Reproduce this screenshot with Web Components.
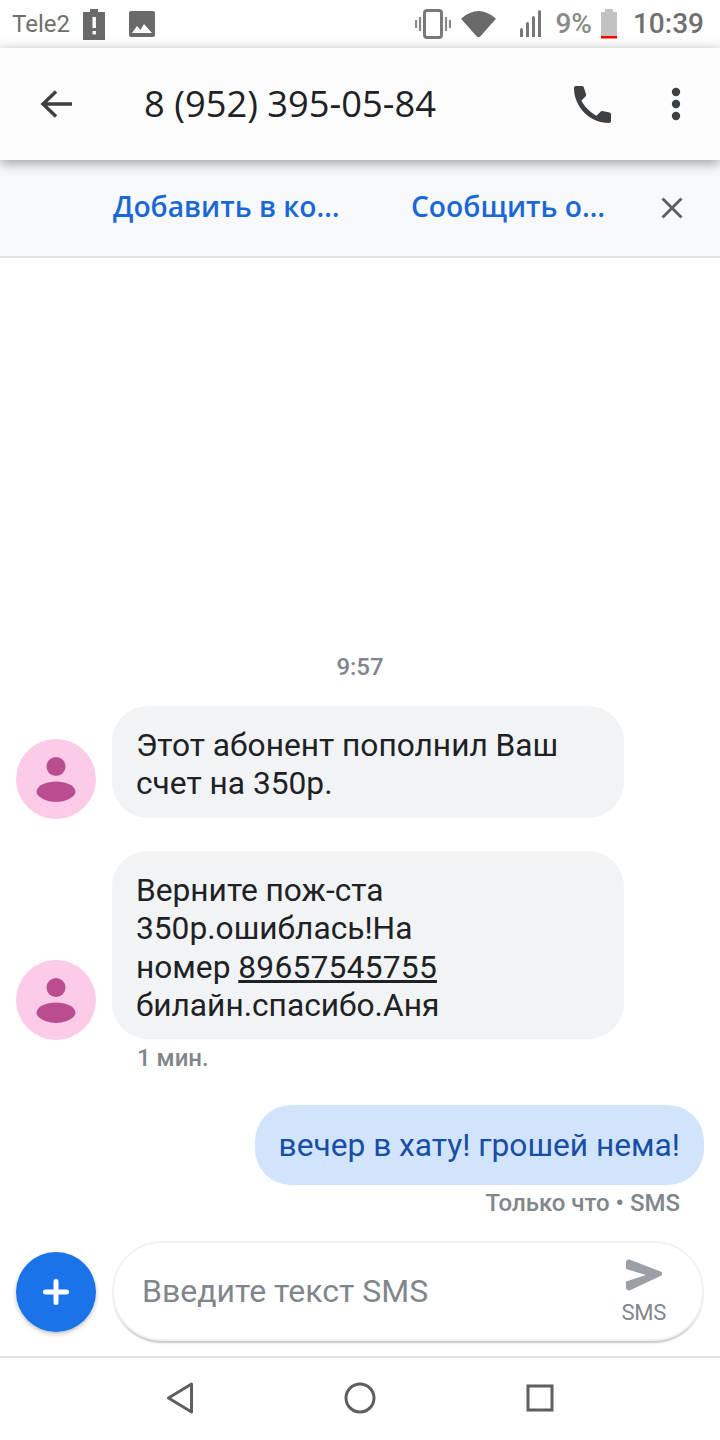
<!DOCTYPE html>
<html lang="ru"><head><meta charset="utf-8"><style>
html,body{margin:0;padding:0;background:#fff}
body{width:720px;height:1440px;overflow:hidden;font-family:Roboto,sans-serif;display:flex;flex-direction:column}
u{letter-spacing:.25px;text-underline-offset:2px}
</style></head><body>
<x-status></x-status>
<x-appbar></x-appbar>
<x-banner></x-banner>
<x-thread>
  <x-time>9:57</x-time>
  <x-msg style="margin-top:25px;--pb:14.500px">Этот абонент пополнил Ваш<br>счет на 350р.</x-msg>
  <x-msg style="margin-top:33px;--pb:13.500px" meta="1 мин.">Верните пож-ста<br>350р.ошиблась!На<br>номер <u>89657545755</u><br>билайн.спасибо.Аня</x-msg>
  <x-out meta="Только что • SMS">вечер в хату! грошей нема!</x-out>
</x-thread>
<x-composer></x-composer>
<x-navbar></x-navbar>
<script>
const def=(n,html)=>customElements.define(n,class extends HTMLElement{constructor(){super();this.attachShadow({mode:'open'}).innerHTML=typeof html==='function'?html(this):html}});
def('x-status',`<style>
:host{display:flex;align-items:center;height:48px;flex:none;background:#fff;color:#6f6f6f;font:400 24px/50px Roboto,sans-serif;padding:0 16px 0 12px;box-sizing:border-box}
svg{display:block;flex:none}
.sp{flex:1}
b{font-weight:500;font-size:28px}
</style>
<span>Tele2</span>
<svg style="margin-left:13px" width="22" height="32" viewBox="0 0 22 32"><path fill="#6a6a6a" d="M7 1h8v3h7v28H0V4h7z"/><rect x="9.500" y="9" width="3.400" height="11" fill="#fff"/><rect x="9.500" y="23" width="3.400" height="3.400" fill="#fff"/></svg>
<svg style="margin-left:24px" width="26" height="26" viewBox="0 0 26 26"><rect width="26" height="26" rx="2" fill="#6a6a6a"/><path fill="#fff" d="M3 22l5-7 3.500 4 3.500-6 8 9z"/></svg>
<span class="sp"></span>
<svg width="36" height="30" viewBox="0 0 36 30" style="margin-right:10px"><rect x="9.500" y="1.500" width="17" height="27" rx="2.500" fill="none" stroke="#7a7a7a" stroke-width="3"/><path stroke="#888" stroke-width="2.200" d="M5 8v14M1 11v8M31 8v14M35 11v8"/></svg>
<svg width="35" height="28" viewBox="0 0 36 28" style="margin-right:24px"><path fill="#6a6a6a" d="M0 8.500Q18-7 36 8.500L20 26.500q-2 2-4 0z"/></svg>
<svg width="21" height="28" viewBox="0 0 21 28" style="margin-right:14px"><path fill="#777" d="M0 20q0-2 1.500-2T3 20v7H0zM6 14q0-2 1.500-2T9 14v13H6zM12 8q0-2 1.500-2T15 8v19h-3zM18 2q0-2 1.500-2T21 2v25h-3z"/></svg>
<span style="font-size:28px;font-weight:500;color:#8a8a8a">9%</span>
<svg width="16" height="30" viewBox="0 0 16 30" style="margin:0 16px 0 9px"><path fill="#c2c2c2" d="M4 0h8v3h4v24H0V3h4z"/><rect y="27" width="16" height="2.500" fill="#f00"/></svg>
<b>10:39</b>`);
def('x-appbar',`<style>
:host{display:flex;align-items:center;height:112px;flex:none;background:#fcfcfc;box-shadow:0 3px 12px rgba(0,0,0,.38);position:relative;z-index:2;box-sizing:border-box}
svg{display:block;flex:none}
h1{margin:0 0 2px 72px;font:400 36.300px/40px "Open Sans",sans-serif;color:#202124;flex:1;letter-spacing:0}
</style>
<svg style="margin-left:40px" width="32" height="32" viewBox="0 0 32 32"><path fill="none" stroke="#3c4043" stroke-width="3.400" d="M32 16H3M16 3.500L3 16l13 12.500"/></svg>
<h1>8 (952) 395-05-84</h1>
<svg width="38" height="38" viewBox="0 0 38 38" style="margin-right:58px"><path fill="#3c4043" d="M8 1H1.800C.8 1 0 1.800 0 3c0 19 16 35 35 35 1.200 0 2-.8 2-2v-6.500c0-1-.6-1.800-1.600-2l-7-1.400c-.7-.1-1.400.1-1.900.6l-4 4C17 28 10 21.500 7.500 15.500l4-4c.5-.5.700-1.200.6-1.900L10 3C9.800 1.800 9 1 8 1z"/></svg>
<svg width="12" height="34" viewBox="0 0 12 34" style="margin-right:38px"><g fill="#3c4043"><circle cx="6" cy="5" r="4.200"/><circle cx="6" cy="17" r="4.200"/><circle cx="6" cy="29" r="4.200"/></g></svg>`);
def('x-banner',`<style>
:host{display:flex;align-items:center;height:98px;flex:none;background:#f8f9fa;border-bottom:2px solid #e3e4e5;box-sizing:border-box;padding:0 0 4px 113px;font:600 28.200px/36px "Open Sans",sans-serif;color:#1a68d6}
svg{display:block;flex:none}
span{white-space:nowrap}
</style>
<span style="width:298px">Добавить в ко…</span><span style="width:196px">Сообщить о…</span>
<svg width="22" height="22" viewBox="0 0 22 22" style="margin:4px 0 0 54px"><path stroke="#5f6368" stroke-width="3" d="M1.500 1.500l19 19M20.500 1.500l-19 19"/></svg>`);
def('x-thread',`<style>:host{display:flex;flex-direction:column;flex:1;min-height:0;justify-content:flex-end;padding-bottom:24px;box-sizing:border-box}</style><slot></slot>`);
def('x-time',`<style>:host{display:block;text-align:center;font:500 24px/28px Roboto,sans-serif;color:#80868b}</style><slot></slot>`);
def('x-msg',h=>`<style>
:host{display:block}
.row{display:flex;align-items:flex-end;padding:0 96px 0 16px}
.av{width:80px;height:80px;border-radius:50%;background:#fccbe8;flex:none;margin-right:16px;display:flex;align-items:center;justify-content:center;margin-bottom:-1px}
.bub{flex:1;background:#f1f3f4;border-radius:36px;padding:20.500px 24px var(--pb);font:400 31.700px/38.500px Roboto,sans-serif;color:#202124}
.meta{font:500 24px/28px Roboto,sans-serif;color:#80868b;padding:5px 0 0 137px}
svg{display:block}
</style>
<div class="row"><div class="av"><svg width="40" height="46" viewBox="0 0 40 46"><path fill="#b94d8f" d="M.5 36C.5 29 11 25.500 20 25.500S39.500 29 39.500 36C39.500 41 29 46 20 46S.5 41 .5 36z"/><circle fill="#b94d8f" cx="20" cy="10.500" r="9.500"/></svg></div><div class="bub"><slot></slot></div></div>
${h.getAttribute('meta')?`<div class="meta">${h.getAttribute('meta')}</div>`:''}`);
def('x-out',h=>`<style>
:host{display:flex;flex-direction:column;align-items:flex-end;padding:33px 16px 0 0}
.bub{background:#d2e3fc;border-radius:36px;padding:21px 24px 19px;font:400 31.700px/40px Roboto,sans-serif;color:#174ea6;white-space:nowrap}
.meta{font:500 24px/28px Roboto,sans-serif;color:#80868b;padding:4px 24px 0 0}
</style><div class="bub"><slot></slot></div><div class="meta">${h.getAttribute('meta')}</div>`);
def('x-composer',`<style>
:host{display:flex;align-items:center;flex:none;height:117px;box-sizing:border-box;padding:0 16px 15px;border-bottom:2px solid #e1e1e1}
.fab{width:80px;height:80px;border-radius:50%;background:#1a73e8;box-shadow:0 2px 4px rgba(0,0,0,.25);flex:none;display:flex;align-items:center;justify-content:center;margin:2px 16px 0 0}
.box{flex:1;height:100px;border-radius:50px;background:#fff;box-sizing:border-box;border:2px solid #f1f2f3;box-shadow:0 3px 2px -1px rgba(0,0,0,.22);display:flex;align-items:center;padding:0 36px 0 28px;font:400 32px/40px Roboto,sans-serif;color:#80868b}
.t{flex:1}
.send{display:flex;flex-direction:column;align-items:center;font:400 22px/24px Roboto,sans-serif;letter-spacing:-.3px;color:#80868b;gap:10px;padding-top:2px}
svg{display:block}
</style>
<div class="fab"><svg width="26" height="26" viewBox="0 0 26 26"><path stroke="#fff" stroke-width="5" stroke-linecap="round" d="M13 2.500v21M2.500 13h21"/></svg></div>
<div class="box"><span class="t">Введите текст SMS</span><div class="send"><svg width="38" height="32" viewBox="0 0 38 32"><path fill="#9aa0a6" d="M1 3.500C1 1 3 0 5 .7l30 11.500c3 1.200 3 3.800 0 5L5 31.300C3 32 1 31 1 28.500v-6l20-6.500-20-6z"/></svg><span>SMS</span></div></div>`);
def('x-navbar',`<style>
:host{display:flex;flex:none;height:82px;align-items:center;justify-content:center;gap:150px;background:#fff;padding-bottom:2px;box-sizing:border-box}
svg{display:block}
</style>
<svg width="28" height="32" viewBox="0 0 28 32"><path fill="none" stroke="#5f5f5f" stroke-width="3" stroke-linejoin="round" d="M25.500 2L2.500 16l23 14z"/></svg>
<svg width="32" height="32" viewBox="0 0 32 32"><circle cx="16" cy="16" r="14" fill="none" stroke="#5f5f5f" stroke-width="3"/></svg>
<svg width="28" height="28" viewBox="0 0 28 28"><rect x="2" y="2" width="24" height="24" fill="none" stroke="#5f5f5f" stroke-width="3"/></svg>`);
</script>
</body></html>
